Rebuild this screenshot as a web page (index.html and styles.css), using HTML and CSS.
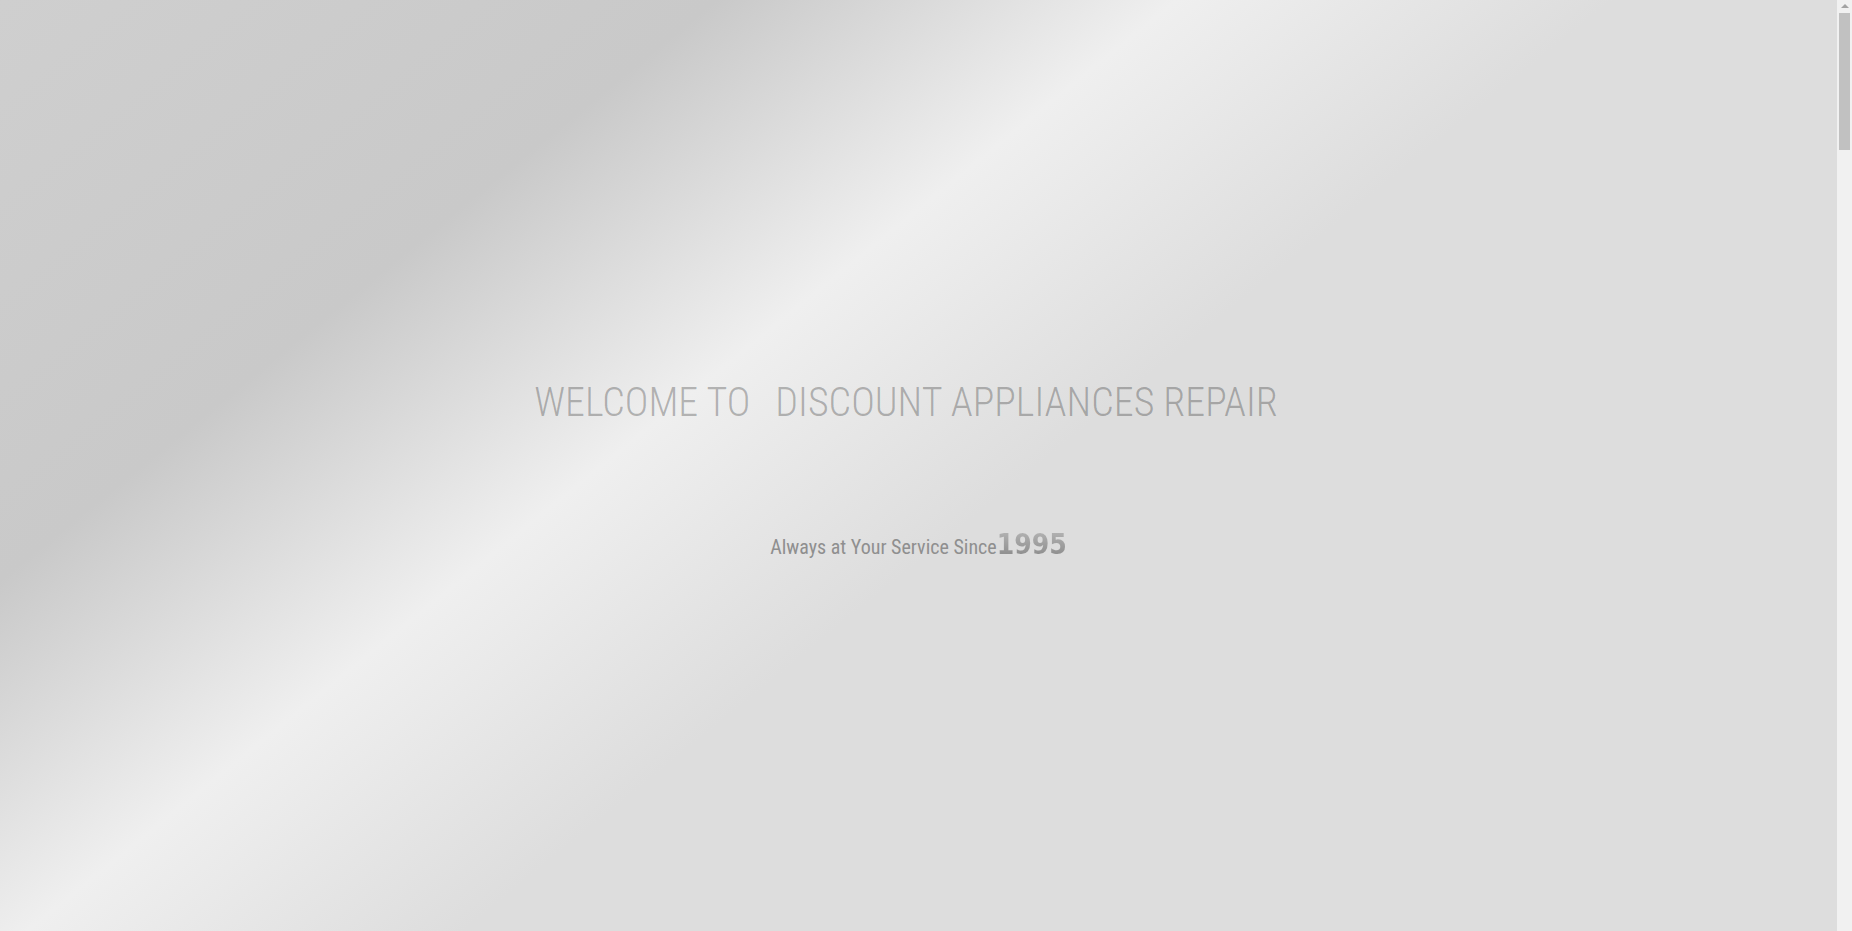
FILE: index.html
```html
<!DOCTYPE html>
<html lang="en">
<head>
<meta charset="utf-8">
<title>Discount Appliances Repair</title>
<link rel="stylesheet" href="styles.css">
</head>
<body>
<div class="site">
  <header class="hero">
    <h1 class="hero-title"><span class="hero-welcome">WELCOME TO</span><span class="hero-name">DISCOUNT APPLIANCES REPAIR</span></h1>
    <p class="hero-tagline">Always at Your Service Since<span class="hero-year">1995</span></p>
  </header>
  <main class="page-body"></main>
</div>
<div class="scrollbar" aria-hidden="true">
  <div class="scrollbar-arrow"></div>
  <div class="scrollbar-thumb"></div>
</div>
</body>
</html>
```
FILE: styles.css
```css
html, body {
  margin: 0;
  padding: 0;
}

body {
  font-family: "Roboto Condensed", Roboto, "Liberation Sans", sans-serif;
  background: #dddddd;
}

.site {
  margin-right: 15px;
}

.hero {
  height: 100vh;
  display: flex;
  flex-direction: column;
  align-items: center;
  justify-content: center;
  background: linear-gradient(141deg,
    #cfcfcf 0%,
    #c9c9c9 24%,
    #efefef 39.4%,
    #dddddd 54%,
    #dddddd 100%);
}

.hero-title {
  margin: 14px 0 97px 0;
  display: flex;
  gap: 25px;
  padding-right: 25px;
  font-family: "Roboto Condensed", Roboto, sans-serif;
  font-weight: 300;
  font-size: 40px;
  line-height: 1.2;
  color: rgba(0, 0, 0, 0.27);
  white-space: nowrap;
}

.hero-tagline {
  margin: 0;
  font-family: "Roboto Condensed", Roboto, sans-serif;
  font-weight: 400;
  font-size: 20px;
  line-height: 1.5;
  color: #8f8f8f;
  white-space: nowrap;
}

.hero-year {
  font-family: "DejaVu Sans Condensed", "DejaVu Sans", sans-serif;
  font-weight: 700;
  font-size: 28px;
  background: linear-gradient(to bottom, #b8b8b8, #858585);
  -webkit-background-clip: text;
  background-clip: text;
  color: transparent;
}

.page-body {
  height: 5190px;
  background: #dddddd;
}

.scrollbar {
  position: fixed;
  top: 0;
  right: 0;
  width: 15px;
  height: 100vh;
  background: #f1f1f1;
  display: flex;
  flex-direction: column;
  align-items: center;
}

.scrollbar-arrow {
  margin-top: 4px;
  width: 0;
  height: 0;
  border-left: 4px solid transparent;
  border-right: 4px solid transparent;
  border-bottom: 4px solid #a3a3a3;
}

.scrollbar-thumb {
  margin-top: 5px;
  width: 11px;
  height: 137px;
  background: #c1c1c1;
}
```
